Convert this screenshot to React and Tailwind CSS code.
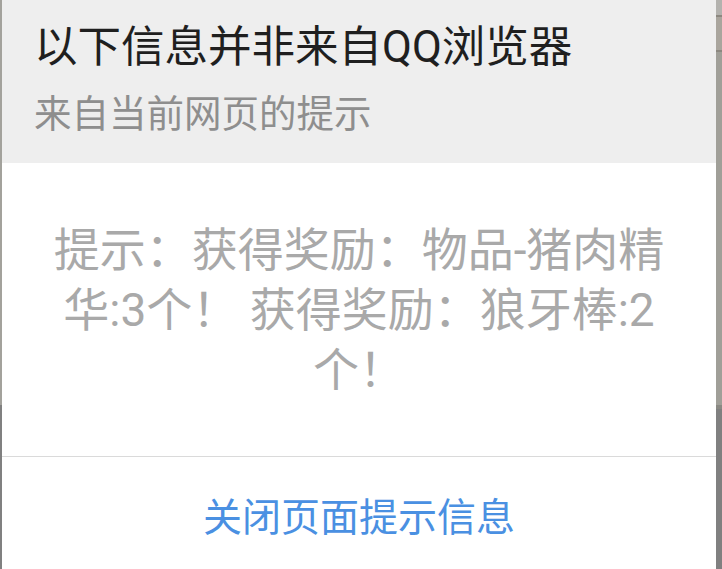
import React from 'react'

const font = { fontFamily: '"Roboto", "Noto Sans CJK SC", sans-serif' }

const Dialog = () => {
  return (
    <div className="flex min-w-0 flex-1 flex-col bg-white">
      {/* 标题 */}
      <div className="h-[163px] bg-[#eeeeee] px-[32px] pt-[19px]">
        <p className="text-[43.5px] leading-[58px] text-[#1f1f1f]">以下信息并非来自QQ浏览器</p>
        <p className="mt-[9px] text-[37.5px] leading-[56px] text-[#8e8e8e]">来自当前网页的提示</p>
      </div>

      {/* 内容 */}
      <div className="flex flex-1 items-center justify-center px-[36px]">
        <p className="text-center text-[46px] leading-[60px] text-[#a9a9a9]">
          提示：获得奖励：物品-猪肉精华:3个！ 获得奖励：狼牙棒:2个！
        </p>
      </div>

      {/* 按钮 */}
      <div className="flex h-[113px] items-center justify-center border-t border-[#dadada] pt-[10px]">
        <button className="text-[39px] leading-[50px] text-[#4a90e2]">关闭页面提示信息</button>
      </div>
    </div>
  )
}

const App = () => {
  return (
    <div className="flex h-[569px] w-[722px] overflow-hidden" style={font}>
      <div className="flex w-[2px] flex-col">
        <div className="h-[405px] bg-[#a3a29c]"></div>
        <div className="flex-1 bg-[#808080]"></div>
      </div>
      <Dialog />
      <div className="flex w-[6px] flex-col">
        <div className="h-[15px] bg-[#b3b2ae]"></div>
        <div className="h-[2px] bg-[#8c8880]"></div>
        <div className="h-[33px] bg-[#a9a59d]"></div>
        <div className="h-[2px] bg-[#8c8880]"></div>
        <div className="h-[353px] bg-[#a09f98]"></div>
        <div className="h-[4px] bg-[#8a8983]"></div>
        <div className="flex-1 bg-[#808080]"></div>
      </div>
    </div>
  )
}

export default App
